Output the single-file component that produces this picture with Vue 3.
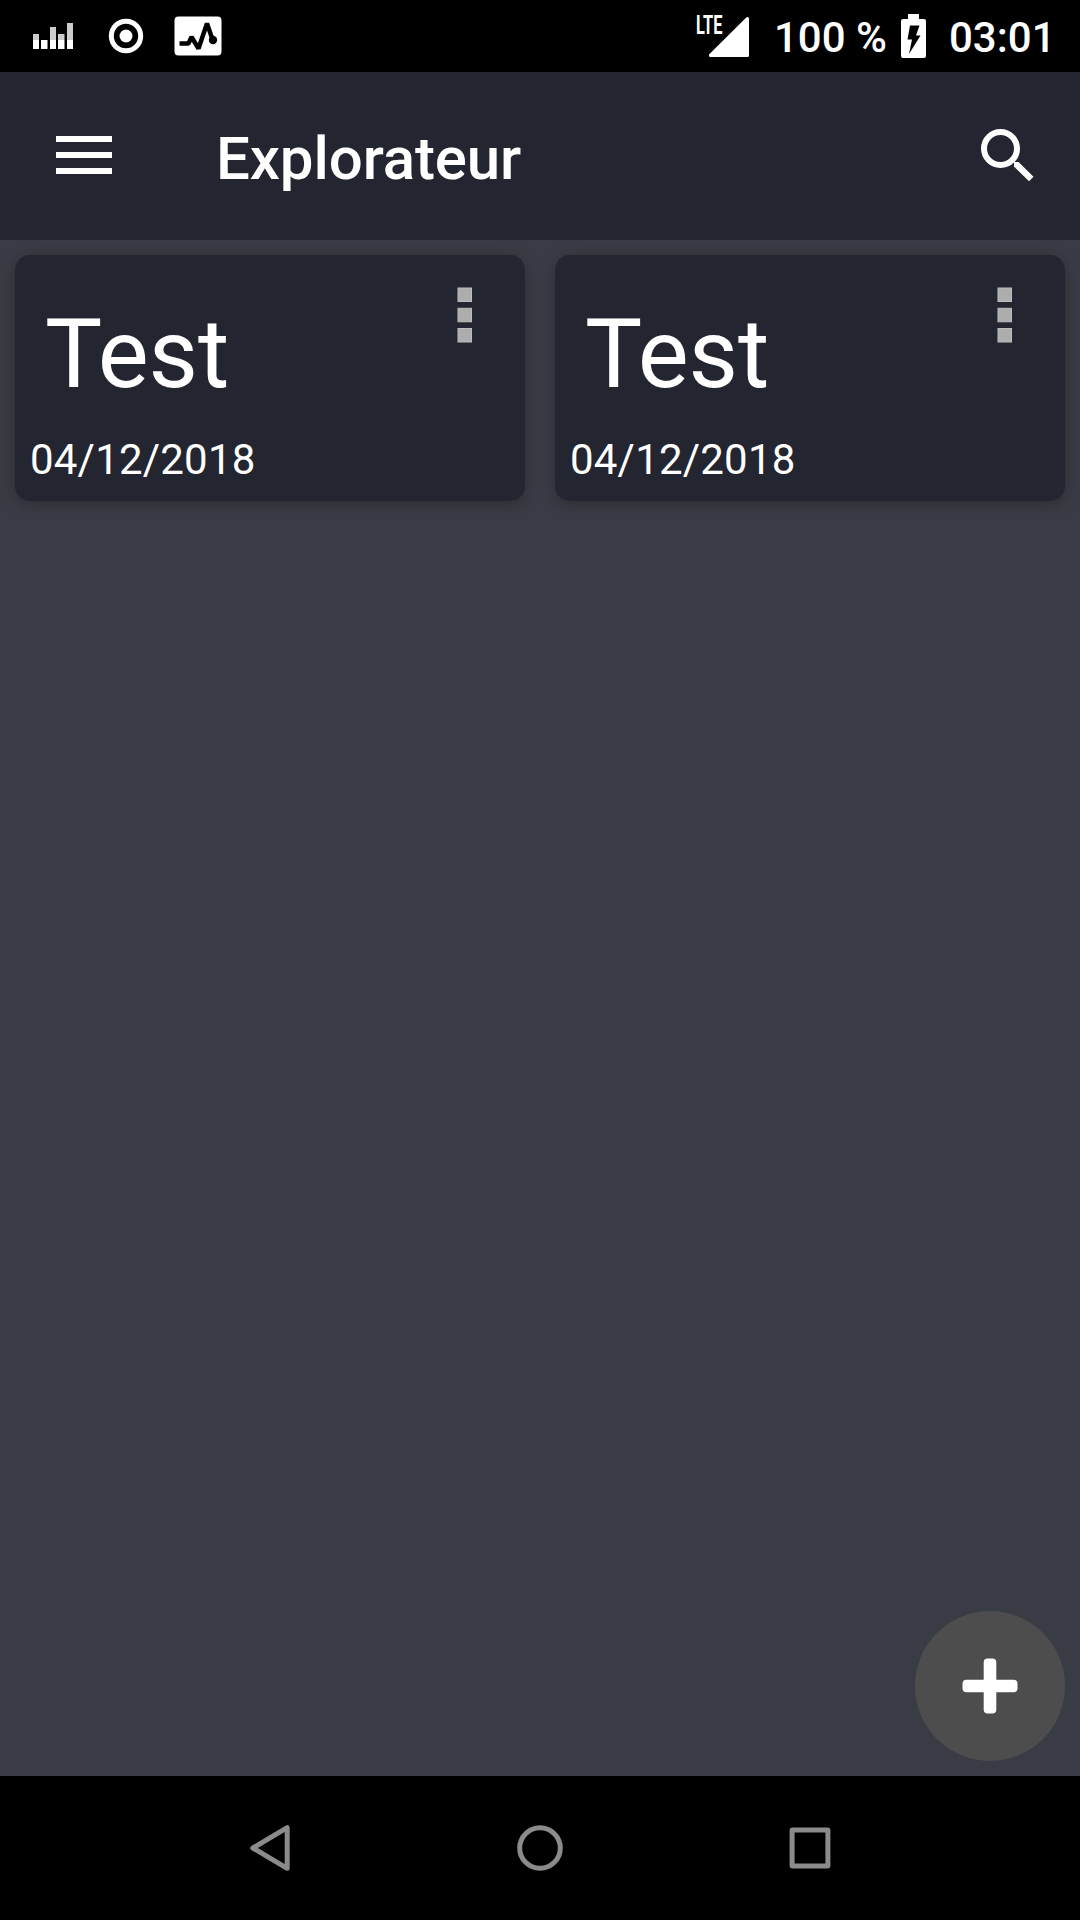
<script setup>
const cards = [
  { title: 'Test', date: '04/12/2018' },
  { title: 'Test', date: '04/12/2018' },
]
</script>

<template>
  <div class="screen">
    <div class="status">
      <div class="notifications">
        <svg width="227" height="72" viewBox="0 0 227 72">
          <path fill="#ccc" d="M33 34h6v6h-6zM50 27h6v13h-6zM58 34h6.500v6h-6.500zM67 23h6v17h-6z" />
          <path fill="#fff" d="M33 40h6v9h-6zM41 40h6.500v9h-6.500zM50 40h6v9h-6zM58 40h6.500v9h-6.500zM67 40h6v9h-6z" />
          <circle cx="126" cy="36" r="14.7" fill="none" stroke="#fff" stroke-width="5" />
          <circle cx="126" cy="36" r="6.500" fill="#fff" />
          <rect x="174.500" y="16.500" width="47" height="39" rx="4" fill="#fff" />
          <path d="M179.500 43.500h9l3-6.500 7 11.500 8.500-25 5.500 16" fill="none" stroke="#000" stroke-width="4.500" stroke-linejoin="bevel" />
          <circle cx="213" cy="40" r="4.200" />
        </svg>
      </div>
      <div class="system">
        <div class="signal">
          <svg width="40" height="40" viewBox="0 0 40 40">
            <path d="M38.500 0q1.500 0 1.500 1.500V38.500q0 1.500-1.500 1.500H1.500Q0 40 0 38.500v-1L37 .7Q37.700 0 38.500 0z" fill="#fff" />
          </svg>
          <span class="lte">LTE</span>
        </div>
        <span class="percent">100 %</span>
        <svg class="battery" width="25" height="44" viewBox="0 0 25 44">
          <path d="M7 0h11v5h5q2 0 2 2v35q0 2-2 2H2q-2 0-2-2V7q0-2 2-2h5z" fill="#fff" />
          <path d="M9 11.500h9.500l-3.500 10h4.500L8 40l3-14.500H6.500z" />
        </svg>
        <span class="clock">03:01</span>
      </div>
    </div>

    <header class="toolbar">
      <svg class="menu" width="56" height="38" viewBox="0 0 56 38">
        <path d="M0 0h56v6H0zM0 16h56v6H0zM0 32h56v6H0z" fill="#fff" />
      </svg>
      <h1>Explorateur</h1>
      <svg class="search" width="53" height="53" viewBox="0 0 53 53">
        <circle cx="19.500" cy="19.500" r="16.500" fill="none" stroke="#fff" stroke-width="6" />
        <path d="M33 33v4.500L48 52.300l4.500-4.500L37.500 33z" fill="#fff" />
      </svg>
    </header>

    <main class="content">
      <section class="grid">
        <article v-for="(card, i) in cards" :key="i" class="card">
          <div class="card-top">
            <h2>{{ card.title }}</h2>
            <svg width="16" height="56" viewBox="0 0 16 56" fill="#adadad" stroke="#bdbdbd">
              <rect x="1" y="1" width="13.500" height="13.500" />
              <rect x="1" y="21.300" width="13.500" height="13.500" />
              <rect x="1" y="41.500" width="13.500" height="13.500" />
            </svg>
          </div>
          <p>{{ card.date }}</p>
        </article>
      </section>
      <button class="add" aria-label="+">
        <svg width="56" height="56" viewBox="0 0 56 56" fill="#fff">
          <rect x="21.700" y="0.500" width="12.600" height="55" rx="4" />
          <rect x="0.500" y="21.700" width="55" height="12.600" rx="4" />
        </svg>
      </button>
    </main>

    <nav class="navbar">
      <svg viewBox="0 0 60 60"><path d="M47.200 9.700v40.600L12.800 30z" /></svg>
      <svg viewBox="0 0 60 60"><circle cx="30" cy="30" r="20.300" /></svg>
      <svg viewBox="0 0 60 60"><rect x="12.100" y="12.100" width="35.800" height="35.800" rx="0.500" /></svg>
    </nav>
  </div>
</template>

<style>
body {
  margin: 0;
  background: #000;
}
</style>

<style scoped>
.screen {
  display: flex;
  flex-direction: column;
  width: 1080px;
  height: 1920px;
  overflow: hidden;
  font-family: Roboto, sans-serif;
  color: #fff;
}
svg {
  display: block;
  flex: none;
}
h1, h2, p {
  margin: 0;
}
.status {
  display: flex;
  justify-content: space-between;
  height: 72px;
  background: #000;
}
.system {
  display: flex;
  width: 384px;
}
.signal {
  position: relative;
  margin: 17px 0 0 13px;
}
.lte {
  position: absolute;
  left: -13.500px;
  top: -6px;
  font-size: 26px;
  line-height: 28px;
  font-weight: 700;
  transform: scaleX(0.63);
  transform-origin: left;
}
.percent,
.clock {
  font-size: 42px;
  line-height: 76px;
  font-weight: 500;
  white-space: nowrap;
}
.percent {
  width: 127px;
  margin-left: 25px;
}
.battery {
  margin-top: 14px;
}
.clock {
  margin-left: 23px;
}
.toolbar {
  display: flex;
  align-items: center;
  height: 168px;
  background: #232530;
}
.menu {
  margin: 0 0 2px 56px;
}
h1 {
  flex: 1;
  margin: 5px 0 0 104px;
  font-size: 60px;
  line-height: 70px;
  font-weight: 500;
  letter-spacing: -0.1px;
}
.search {
  margin: 0 46px 1px 0;
}
.content {
  display: flex;
  flex: 1;
  flex-direction: column;
  justify-content: space-between;
  padding: 15px;
  background: #3a3c45;
}
.grid {
  display: flex;
  gap: 30px;
}
.card {
  display: flex;
  flex: 1;
  flex-direction: column;
  justify-content: space-between;
  box-sizing: border-box;
  height: 246px;
  padding: 32px 15px 16px;
  border-radius: 15px;
  background: #232530;
  box-shadow: 0 3px 15px rgba(0, 0, 0, 0.26);
}
.card-top {
  display: flex;
  justify-content: space-between;
  padding: 0 37px 0 15px;
}
h2 {
  margin-top: 11px;
  font-size: 96px;
  line-height: 112px;
  font-weight: 400;
}
p {
  font-size: 42px;
  line-height: 50px;
  letter-spacing: 0.2px;
}
.add {
  display: flex;
  align-items: center;
  justify-content: center;
  align-self: flex-end;
  width: 150px;
  height: 150px;
  padding: 0;
  border: 0;
  border-radius: 50%;
  background: #4d4d4d;
}
.navbar {
  display: flex;
  align-items: center;
  justify-content: center;
  gap: 210px;
  height: 144px;
  background: #000;
}
.navbar svg {
  width: 60px;
  height: 60px;
  fill: none;
  stroke: #8b8b8b;
  stroke-width: 5;
  stroke-linejoin: round;
}
</style>
